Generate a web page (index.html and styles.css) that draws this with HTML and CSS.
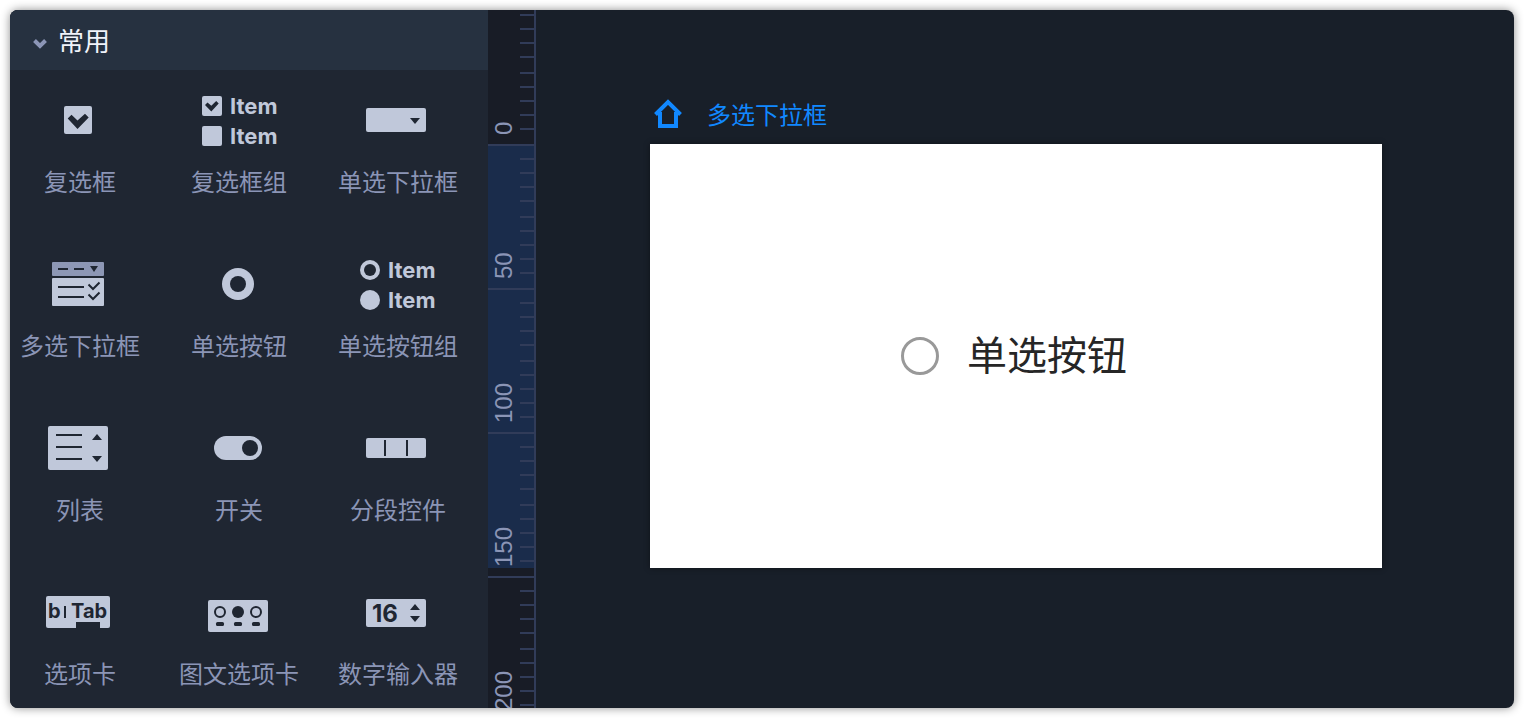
FILE: index.html
```
<!DOCTYPE html>
<html lang="zh-CN">
<head>
  <meta charset="UTF-8">
  <meta name="viewport" content="width=device-width, initial-scale=1.0">
  <title>多选下拉框</title>
  <link rel="stylesheet" href="styles.css">
</head>
<body>
  <div class="editor">
    <aside class="sidebar">
      <button class="group-toggle" type="button" aria-expanded="true">
        <svg class="chevron" width="16" height="16" viewBox="0 0 16 16"><path d="M2.500 5.500 8 11l5.500-5.500"/></svg>
        常用
      </button>
      <ul class="widgets">
        <li class="widget">
          <svg class="widget-icon" viewBox="0 0 80 56">
            <rect x="24" y="14" width="28" height="28" rx="2"/>
            <path class="dark" d="M27.700 26.500 31.500 22.700 37.500 28.500 45 21.800 48.700 25.500 37.500 37z"/>
          </svg>
          <span>复选框</span>
        </li>
        <li class="widget">
          <svg class="widget-icon" viewBox="0 0 80 56">
            <rect x="3" y="4" width="20" height="20" rx="2"/>
            <path class="dark" d="M6 13 8.500 10.500 12.300 13.800 17.200 9 19.700 11.500 12.300 19.500z"/>
            <rect x="3" y="34" width="20" height="20" rx="2"/>
            <text x="31" y="22">Item</text>
            <text x="31" y="52">Item</text>
          </svg>
          <span>复选框组</span>
        </li>
        <li class="widget">
          <svg class="widget-icon" viewBox="0 0 80 56">
            <rect x="8" y="16" width="60" height="24" rx="2"/>
            <path class="dark" d="M52 26h10l-5 6z"/>
          </svg>
          <span>单选下拉框</span>
        </li>
        <li class="widget">
          <svg class="widget-icon" viewBox="0 0 80 56">
            <rect class="muted" x="12" y="6" width="52" height="14" rx="1"/>
            <rect x="12" y="22" width="52" height="28" rx="1"/>
            <path class="line" d="M18 13h10M34 13h10M18 31h26M18 41h26"/>
            <path class="dark" d="M50 10h8l-4 6z"/>
            <path class="line" d="M48.500 28.500 53 33l6.500-6.500M48.500 38.500 53 43l6.500-6.500"/>
          </svg>
          <span>多选下拉框</span>
        </li>
        <li class="widget">
          <svg class="widget-icon" viewBox="0 0 80 56">
            <circle cx="39" cy="28" r="16"/>
            <circle class="dark" cx="39" cy="28" r="8"/>
          </svg>
          <span>单选按钮</span>
        </li>
        <li class="widget">
          <svg class="widget-icon" viewBox="0 0 80 56">
            <circle cx="12" cy="14" r="10"/>
            <circle class="dark" cx="12" cy="14" r="6"/>
            <circle cx="12" cy="44" r="10"/>
            <text x="30" y="22">Item</text>
            <text x="30" y="52">Item</text>
          </svg>
          <span>单选按钮组</span>
        </li>
        <li class="widget">
          <svg class="widget-icon" viewBox="0 0 80 56">
            <rect x="8" y="6" width="60" height="44" rx="2"/>
            <path class="line" d="M16 15h26M16 27h26M16 39h26"/>
            <path class="dark" d="M52 20h10l-5-6zM52 36h10l-5 6z"/>
          </svg>
          <span>列表</span>
        </li>
        <li class="widget">
          <svg class="widget-icon" viewBox="0 0 80 56">
            <rect x="15" y="16" width="48" height="24" rx="12"/>
            <circle class="dark" cx="51" cy="28" r="8"/>
          </svg>
          <span>开关</span>
        </li>
        <li class="widget">
          <svg class="widget-icon" viewBox="0 0 80 56">
            <rect x="8" y="18" width="60" height="20" rx="2"/>
            <path class="line" d="M27 20v16M49 20v16"/>
          </svg>
          <span>分段控件</span>
        </li>
        <li class="widget">
          <svg class="widget-icon" viewBox="0 0 80 56">
            <rect x="6" y="12" width="64" height="32" rx="2"/>
            <path class="dark" d="M24 22h2v12h-2zM36 38h24v6h-24z"/>
            <text class="dark small" x="8" y="34">b</text>
            <text class="dark small" x="31" y="34">Tab</text>
          </svg>
          <span>选项卡</span>
        </li>
        <li class="widget">
          <svg class="widget-icon" viewBox="0 0 80 56">
            <rect x="9" y="16" width="60" height="32" rx="2"/>
            <circle class="line" cx="21" cy="28" r="5"/>
            <circle class="dark" cx="39" cy="28" r="6"/>
            <circle class="line" cx="57" cy="28" r="5"/>
            <rect class="dark" x="17" y="38" width="8" height="4" rx="1.500"/>
            <rect class="dark" x="35" y="38" width="8" height="4" rx="1.500"/>
            <rect class="dark" x="53" y="38" width="8" height="4" rx="1.500"/>
          </svg>
          <span>图文选项卡</span>
        </li>
        <li class="widget">
          <svg class="widget-icon" viewBox="0 0 80 56">
            <rect x="8" y="15" width="60" height="28" rx="2"/>
            <text class="dark large" x="14" y="38">16</text>
            <path class="dark" d="M52 26h10l-5-6zM52 32h10l-5 6z"/>
          </svg>
          <span>数字输入器</span>
        </li>
      </ul>
    </aside>

    <div class="ruler">
      <div class="ruler-range"></div>
      <ol class="ruler-scale">
        <li>0</li>
        <li>50</li>
        <li>100</li>
        <li>150</li>
        <li>200</li>
      </ol>
    </div>

    <main class="canvas">
      <div class="page-title">
        <svg class="home" width="28" height="32" viewBox="0 0 28 32"><path d="M1.500 16.500 14 4l12.500 12.500M6 14v14h16V14"/></svg>
        <span>多选下拉框</span>
      </div>
      <section class="artboard">
        <label class="radio">
          <input type="radio" name="option">
          <span>单选按钮</span>
        </label>
      </section>
    </main>
  </div>
</body>
</html>
```
FILE: styles.css
```
:root {
  --panel: #1f2632;
  --panel-head: #263140;
  --canvas: #181f29;
  --ruler: #181c26;
  --range: #1a2c4b;
  --tick: #313c59;
  --icon: #c0c8da;
  --label: #8b95b6;
  --accent: #1188ff;
}

* {
  box-sizing: border-box;
}

body {
  margin: 0;
  padding: 10px;
  height: 100vh;
  background: #fff;
  font-family: "Noto Sans CJK SC", sans-serif;
}

ul, ol {
  list-style: none;
  margin: 0;
  padding: 0;
}

.editor {
  display: flex;
  height: 100%;
  border-radius: 8px;
  overflow: hidden;
  background: var(--canvas);
  box-shadow: 0 0 10px rgba(0, 0, 0, 0.45);
}

/* Widget panel */
.sidebar {
  flex: 0 0 478px;
  background: var(--panel);
  overflow: hidden;
}

.group-toggle {
  display: flex;
  align-items: center;
  gap: 10px;
  width: 100%;
  height: 60px;
  padding: 0 22px 2px;
  border: none;
  background: var(--panel-head);
  color: #f0f3fa;
  font: inherit;
  font-size: 26px;
  cursor: pointer;
}

.chevron {
  margin-top: 8px;
  fill: none;
  stroke: var(--label);
  stroke-width: 4;
}

.widgets {
  display: grid;
  grid-template-columns: repeat(3, 1fr);
  column-gap: 19px;
  padding-right: 20px;
}

.widget {
  display: flex;
  flex-direction: column;
  align-items: center;
  gap: 15px;
  padding: 22px 0 35px;
  color: var(--label);
  font-size: 24px;
  line-height: 36px;
  white-space: nowrap;
}

.widget-icon {
  width: 80px;
  height: 56px;
  fill: var(--icon);
  font-family: Inter, sans-serif;
  font-size: 22px;
  font-weight: 700;
}

.widget-icon .dark {
  fill: var(--panel);
}

.widget-icon .muted {
  fill: #8d97b5;
}

.widget-icon .line {
  fill: none;
  stroke: var(--panel);
  stroke-width: 2;
}

.widget-icon .small {
  font-size: 20px;
}

.widget-icon .large {
  font-size: 24px;
}

/* Vertical ruler, one scale step is 144px */
.ruler {
  position: relative;
  flex: 0 0 48px;
  background: var(--ruler);
  border-right: 2px solid var(--tick);
  overflow: hidden;
}

.ruler-range {
  position: absolute;
  top: 134px;
  left: 0;
  width: 100%;
  height: 424px;
  background: var(--range);
}

.ruler-scale {
  position: relative;
  margin-top: -10px;
  color: var(--label);
  font-family: "Liberation Sans", sans-serif;
  font-size: 24px;
  line-height: 32px;
}

/* Steps are turned upside down, so left padding shows on the right */
.ruler-scale li {
  height: 144px;
  padding-top: 9px;
  padding-left: 14px;
  writing-mode: vertical-rl;
  transform: rotate(180deg);
  background:
    linear-gradient(var(--tick), var(--tick)) 0 142px / 100% 2px no-repeat,
    repeating-linear-gradient(to top, transparent 0 14px, var(--tick) 14px 16px, transparent 16px 28px, var(--tick) 28px 30px, transparent 30px 42px, var(--tick) 42px 44px, transparent 44px 56px, var(--tick) 56px 58px, transparent 58px 72px) 0 0 / 14px 100% no-repeat,
    linear-gradient(var(--tick), var(--tick)) 0 70px / 14px 2px no-repeat;
}

/* Canvas */
.canvas {
  flex: 1;
  min-width: 0;
  padding: 84px 132px 0 114px;
}

.page-title {
  display: flex;
  align-items: center;
  gap: 25px;
  height: 50px;
  padding: 0 0 10px 4px;
  color: var(--accent);
  font-size: 24px;
  line-height: 36px;
}

.home {
  fill: none;
  stroke: currentColor;
  stroke-width: 4;
}

.artboard {
  display: flex;
  align-items: center;
  justify-content: center;
  height: 424px;
  padding-right: 4px;
  background: #fff;
  box-shadow: 0 0 6px rgba(0, 0, 0, 0.4);
}

.radio {
  display: flex;
  align-items: center;
  gap: 28px;
  color: #262626;
  font-size: 40px;
  line-height: 60px;
}

.radio span {
  padding-bottom: 6px;
}

.radio input {
  appearance: none;
  width: 38px;
  height: 38px;
  margin: 0;
  border: 3px solid #999;
  border-radius: 50%;
}

.radio input:checked {
  border: 12px solid var(--accent);
}
```
